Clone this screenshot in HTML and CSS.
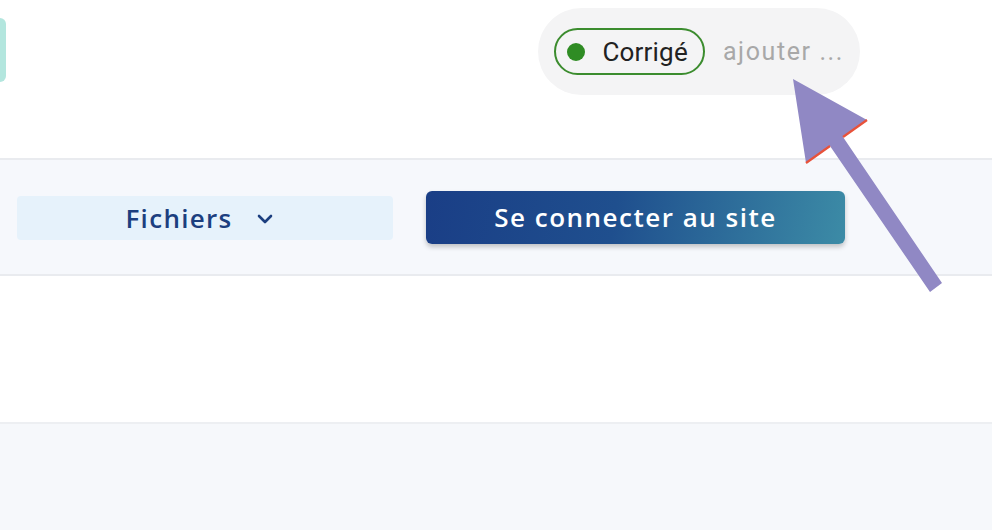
FILE: index.html
```html
<!DOCTYPE html>
<html lang="fr">
<head>
    <meta charset="UTF-8">
    <meta name="viewport" content="width=device-width, initial-scale=1.0">
    <title>Fichiers</title>
    <link rel="stylesheet" href="styles.css">
</head>
<body>
    <div class="top">
        <div class="tab-edge"></div>
        <div class="tags">
            <span class="chip"><span class="dot"></span>Corrigé</span>
            <span class="add">ajouter ...</span>
        </div>
    </div>

    <div class="toolbar">
        <button class="files">Fichiers
            <svg class="chev" width="16" height="10" viewBox="0 0 16 10"><path d="M2 2 L8 8 L14 2" fill="none" stroke="#1c3f7f" stroke-width="2.6" stroke-linecap="round" stroke-linejoin="round"/></svg>
        </button>
        <button class="connect">Se connecter au site</button>
    </div>

    <div class="blank"></div>
    <div class="bottom"></div>

    <!-- annotation arrow pointing at "ajouter ..." -->
    <svg class="arrow" width="992" height="530" viewBox="0 0 992 530">
        <polygon points="793,79 806,163 830,146 930,292 942,283 843,137 867,120" fill="#9088c4"/>
        <path d="M806,163 L830,146 M843,137 L867,120" stroke="#e8523a" stroke-width="2.2" fill="none"/>
    </svg>
</body>
</html>
```

FILE: styles.css
```css
body { margin: 0; font-family: Roboto, "Liberation Sans", sans-serif; background: #fff; position: relative; height: 530px; overflow: hidden; }

.top { height: 158px; display: flex; align-items: flex-start; justify-content: space-between; }
.tab-edge { width: 6px; height: 64px; margin-top: 18px; background: #b3e6de; border-radius: 0 6px 6px 0; }
.tags { margin: 8px 132px 0 0; height: 87px; box-sizing: border-box; padding: 0 16px; display: flex; align-items: center; gap: 18px; background: #f4f4f5; border-radius: 44px; }
.chip { display: flex; align-items: center; gap: 17px; height: 47px; box-sizing: border-box; padding: 0 15px 0 11px; border: 2px solid #3b8c2e; border-radius: 24px; font-size: 26px; color: #222; letter-spacing: 0.2px; }
.dot { width: 18px; height: 18px; border-radius: 50%; background: #2f8c24; }
.add { font-size: 25px; color: #a8a8a8; letter-spacing: 1.6px; }

.toolbar { height: 118px; box-sizing: border-box; border-top: 2px solid #e9ebef; border-bottom: 2px solid #e9ebef; background: #f6f8fc; display: flex; align-items: center; padding: 0 0 0 17px; gap: 33px; }
.files { width: 376px; height: 44px; margin-top: 2px; border: none; border-radius: 4px; background: #e6f2fb; color: #1c3f7f; font-family: "Open Sans", sans-serif; font-weight: 600; font-size: 26px; letter-spacing: 1.3px; display: flex; align-items: center; justify-content: center; gap: 24px; padding: 0 12px 0 0; }
.chev { margin-top: 2px; }
.connect { width: 419px; height: 53px; border: none; border-radius: 6px; background: linear-gradient(100deg, #1a3e86 0%, #1f4f8e 45%, #3c8ba6 100%); color: #fff; font-family: "Open Sans", sans-serif; font-weight: 600; font-size: 26px; letter-spacing: 1.5px; box-shadow: 0 3px 5px rgba(0,0,0,0.22); }

.blank { height: 146px; border-bottom: 2px solid #edeff2; }
.bottom { height: 110px; background: #f6f8fb; }

.arrow { position: absolute; left: 0; top: 0; pointer-events: none; }
```
